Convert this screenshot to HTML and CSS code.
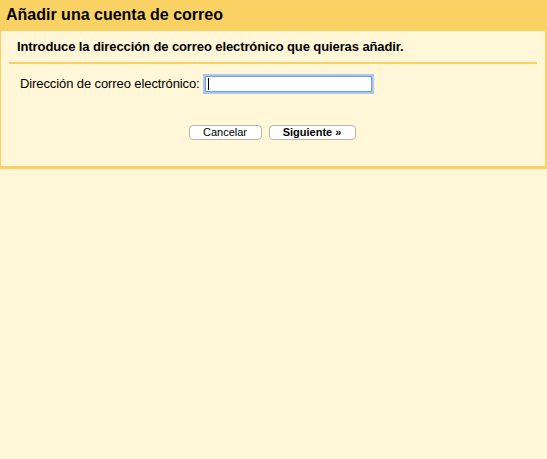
FILE: index.html
```html
<!DOCTYPE html>
<html lang="es">
<head>
<meta charset="utf-8">
<title>Añadir una cuenta de correo</title>
<link rel="stylesheet" href="styles.css">
</head>
<body>
  <div class="dialog">
    <div class="dialog-title">Añadir una cuenta de correo</div>
    <div class="dialog-body">
      <div class="intro">Introduce la dirección de correo electrónico que quieras añadir.</div>
      <div class="field-row">
        <label class="field-label">Dirección de correo electrónico:</label>
        <div class="field"><span class="caret"></span></div>
      </div>
      <div class="actions">
        <button class="btn btn-cancel">Cancelar</button>
        <button class="btn btn-next">Siguiente »</button>
      </div>
    </div>
  </div>
</body>
</html>
```

FILE: styles.css
```css
html, body {
  margin: 0;
  padding: 0;
  background: #fff7d7;
}

body {
  width: 547px;
  height: 459px;
  font-family: "Liberation Sans", Arial, sans-serif;
  color: #000;
}

.dialog {
  display: flex;
  flex-direction: column;
}

.dialog-title {
  box-sizing: border-box;
  height: 31px;
  padding: 5px 6px 0;
  background: #fad163;
  font-size: 16px;
  font-weight: bold;
  line-height: 19px;
}

.dialog-body {
  height: 135px;
  background: #fff7d7;
  border-left: 1px solid #fad163;
  border-right: 2px solid #fad163;
  border-bottom: 3px solid #fad163;
  display: flex;
  flex-direction: column;
}

.intro {
  margin: 0 8px;
  padding: 8px 8px 8px;
  border-bottom: 2px solid #fad163;
  font-size: 13px;
  font-weight: bold;
  line-height: 15px;
  letter-spacing: -0.1px;
}

.field-row {
  display: flex;
  align-items: center;
  margin-top: 12px;
  padding-left: 19px;
}

.field-label {
  font-size: 13px;
  line-height: 16px;
  letter-spacing: -0.1px;
  margin-right: 5px;
}

.field {
  box-sizing: border-box;
  width: 167px;
  height: 16px;
  background: #fff;
  border: 1px solid #6d9fdf;
  box-shadow: 0 0 0 2px #a9c8f0;
  display: flex;
  align-items: center;
  padding-left: 2px;
}

.caret {
  display: block;
  width: 1px;
  height: 12px;
  background: #000;
}

.actions {
  display: flex;
  justify-content: center;
  gap: 7px;
  margin-top: 33px;
  padding-right: 2px;
}

.btn {
  box-sizing: border-box;
  height: 15px;
  padding: 0;
  background: #fff;
  border: 1px solid #b9b4a6;
  border-radius: 4px;
  font-family: "Liberation Sans", Arial, sans-serif;
  font-size: 11px;
  line-height: 13px;
  color: #000;
}

.btn-cancel {
  width: 73px;
}

.btn-next {
  width: 87px;
  font-weight: bold;
}
```
